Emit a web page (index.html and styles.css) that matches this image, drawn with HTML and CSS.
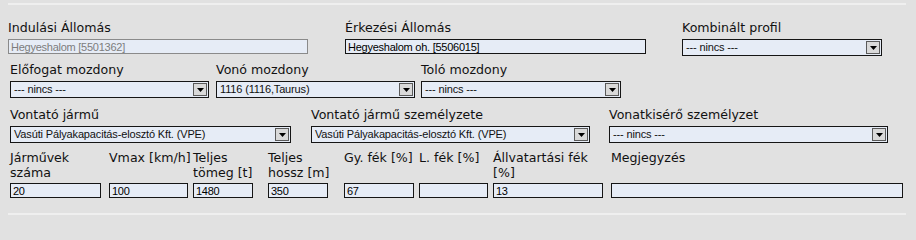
FILE: index.html
```html
<!DOCTYPE html>
<html lang="hu">
<head>
<meta charset="utf-8">
<title>Vonat adatok</title>
<link rel="stylesheet" href="styles.css">
</head>
<body>
<div class="panel">
  <div class="row row1">
    <div class="f r1a"><div class="lbl">Indulási Állomás</div><input class="inp disabled" value="Hegyeshalom [5501362]" disabled></div>
    <div class="f r1b"><div class="lbl">Érkezési Állomás</div><input class="inp" value="Hegyeshalom oh. [5506015]"></div>
    <div class="f r1c"><div class="lbl">Kombinált profil</div><div class="sel"><span class="val">--- nincs ---</span><span class="btn"><svg width="7" height="4" viewBox="0 0 7 4"><polygon points="0,0 7,0 3.5,4" fill="#000"/></svg></span></div></div>
  </div>
  <div class="row row2">
    <div class="f r2a"><div class="lbl">Előfogat mozdony</div><div class="sel"><span class="val">--- nincs ---</span><span class="btn"><svg width="7" height="4" viewBox="0 0 7 4"><polygon points="0,0 7,0 3.5,4" fill="#000"/></svg></span></div></div>
    <div class="f r2b"><div class="lbl">Vonó mozdony</div><div class="sel"><span class="val">1116 (1116,Taurus)</span><span class="btn"><svg width="7" height="4" viewBox="0 0 7 4"><polygon points="0,0 7,0 3.5,4" fill="#000"/></svg></span></div></div>
    <div class="f r2c"><div class="lbl">Toló mozdony</div><div class="sel"><span class="val">--- nincs ---</span><span class="btn"><svg width="7" height="4" viewBox="0 0 7 4"><polygon points="0,0 7,0 3.5,4" fill="#000"/></svg></span></div></div>
  </div>
  <div class="row row3">
    <div class="f r3a"><div class="lbl">Vontató jármű</div><div class="sel"><span class="val">Vasúti Pályakapacitás-elosztó Kft. (VPE)</span><span class="btn"><svg width="7" height="4" viewBox="0 0 7 4"><polygon points="0,0 7,0 3.5,4" fill="#000"/></svg></span></div></div>
    <div class="f r3b"><div class="lbl">Vontató jármű személyzete</div><div class="sel"><span class="val">Vasúti Pályakapacitás-elosztó Kft. (VPE)</span><span class="btn"><svg width="7" height="4" viewBox="0 0 7 4"><polygon points="0,0 7,0 3.5,4" fill="#000"/></svg></span></div></div>
    <div class="f r3c"><div class="lbl">Vonatkisérő személyzet</div><div class="sel"><span class="val">--- nincs ---</span><span class="btn"><svg width="7" height="4" viewBox="0 0 7 4"><polygon points="0,0 7,0 3.5,4" fill="#000"/></svg></span></div></div>
  </div>
  <div class="row row4">
    <div class="f r4a"><div class="lbl lbl2">Járművek<br>száma</div><input class="inp" value="20"></div>
    <div class="f r4b"><div class="lbl lbl2">Vmax [km/h]</div><input class="inp" value="100"></div>
    <div class="f r4c"><div class="lbl lbl2">Teljes<br>tömeg [t]</div><input class="inp" value="1480"></div>
    <div class="f r4d"><div class="lbl lbl2">Teljes<br>hossz [m]</div><input class="inp" value="350"></div>
    <div class="f r4e"><div class="lbl lbl2">Gy. fék [%]</div><input class="inp" value="67"></div>
    <div class="f r4f"><div class="lbl lbl2">L. fék [%]</div><input class="inp" value=""></div>
    <div class="f r4g"><div class="lbl lbl2">Állvatartási fék<br>[%]</div><input class="inp" value="13"></div>
    <div class="f r4h"><div class="lbl lbl2">Megjegyzés</div><input class="inp" value=""></div>
  </div>
</div>
</body>
</html>
```

FILE: styles.css
```css
html, body {
  margin: 0;
  padding: 0;
}
body {
  background: #e1e1e1;
  font-family: "DejaVu Sans", Verdana, sans-serif;
  font-size: 12.6px;
  color: #111;
  width: 916px;
  height: 222px;
  overflow: hidden;
}
.panel {
  margin: 3px 0 0 8px;
  width: 898px;
  border-top: 2px solid #efefef;
  border-bottom: 2px solid #efefef;
  padding: 15px 0 15px 0;
}
.row {
  display: flex;
  align-items: flex-start;
}
.f {
  display: flex;
  flex-direction: column;
  flex: none;
}
.lbl {
  height: 15px;
  line-height: 15px;
  margin-bottom: 4px;
  white-space: nowrap;
}
.lbl2 {
  height: 30px;
  margin-bottom: 3px;
}
.inp {
  box-sizing: border-box;
  height: 15px;
  width: 100%;
  margin: 0;
  border: 1px solid #151515;
  background: #e6ecf6;
  padding: 0 2px;
  font-family: "Liberation Sans", Arial, sans-serif;
  font-size: 11px;
  letter-spacing: -0.25px;
  line-height: 13px;
  color: #000;
  outline: none;
}
.inp.disabled {
  border-color: #8a8a8a;
  color: #7d7d7d;
}
.sel {
  box-sizing: border-box;
  height: 17px;
  width: 100%;
  border: 1px solid #151515;
  background: #e6ecf6;
  display: flex;
  align-items: center;
}
.val {
  flex: 1;
  padding-left: 3px;
  font-family: "Liberation Sans", Arial, sans-serif;
  font-size: 11px;
  letter-spacing: -0.15px;
  line-height: 13px;
  white-space: nowrap;
  overflow: hidden;
}
.btn {
  box-sizing: border-box;
  flex: none;
  width: 14px;
  height: 13px;
  margin-right: 1px;
  border: 1px solid #5a5a5a;
  background: #d9d9d9;
  display: flex;
  align-items: flex-end;
  justify-content: center;
  padding-bottom: 3px;
}
.btn svg {
  display: block;
}

/* row 1 */
.r1a { width: 300px; }
.r1b { width: 301px; margin-left: 37px; }
.r1c { width: 200px; margin-left: 36px; }

/* row 2 */
.row2 { margin-top: 6px; padding-left: 2px; }
.r2a { width: 199px; }
.r2b { width: 199px; margin-left: 7px; }
.r2c { width: 200px; margin-left: 6px; }

/* row 3 */
.row3 { margin-top: 9px; padding-left: 2px; }
.r3a { width: 281px; }
.r3b { width: 279px; margin-left: 20px; }
.r3c { width: 279px; margin-left: 19px; }

/* row 4 */
.row4 { margin-top: 7px; padding-left: 2px; }
.r4a { width: 91px; }
.r4b { width: 79px; margin-left: 8px; }
.r4c { width: 60px; margin-left: 5px; }
.r4d { width: 60px; margin-left: 15px; }
.r4e { width: 70px; margin-left: 16px; }
.r4f { width: 69px; margin-left: 5px; }
.r4g { width: 110px; margin-left: 5px; }
.r4h { width: 292px; margin-left: 8px; }
```
